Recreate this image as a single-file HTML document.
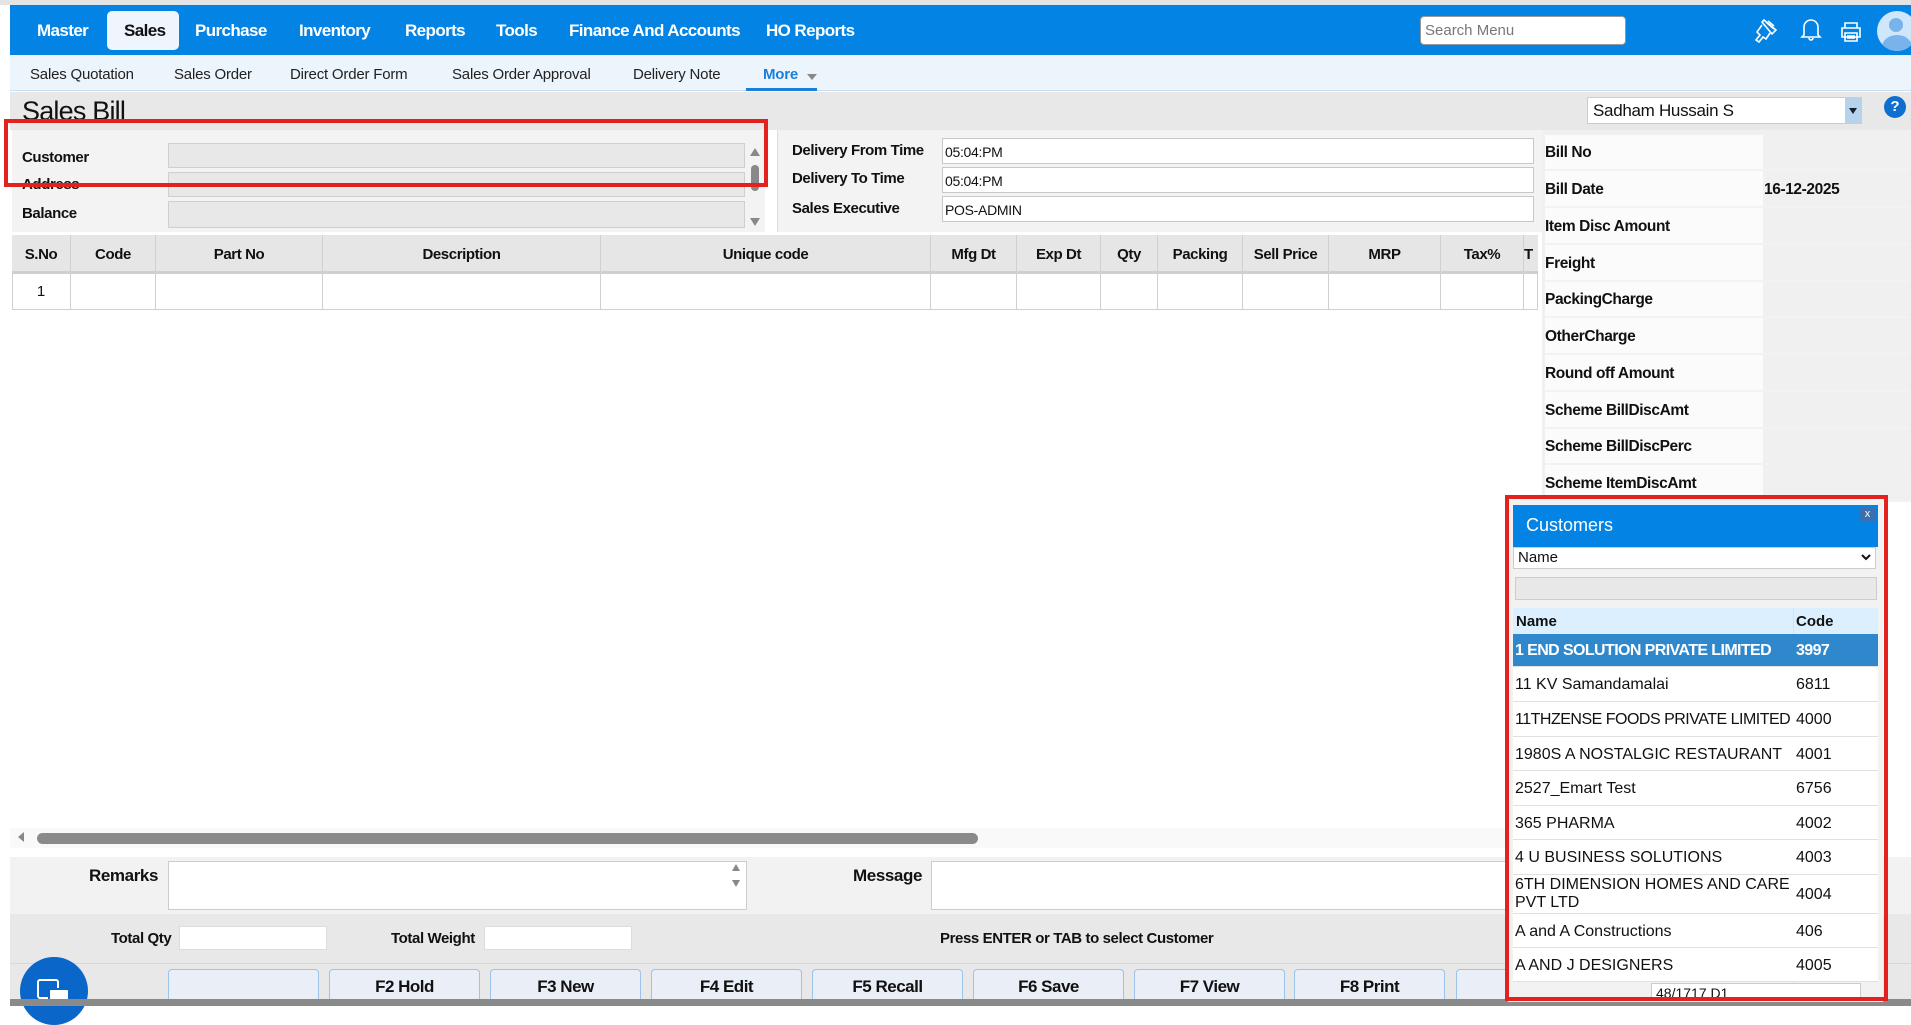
<!DOCTYPE html>
<html><head><meta charset="utf-8"><style>
*{box-sizing:border-box;margin:0;padding:0}
body{width:1911px;height:1006px;overflow:hidden;background:#fff;font-family:"Liberation Sans",sans-serif;position:relative;color:#111}
.a{position:absolute}
.nav{left:10px;top:5px;width:1901px;height:50px;background:#0383e3}
.nv{position:absolute;top:21px;color:#fff;font-weight:bold;font-size:17px;letter-spacing:-0.6px}
.sub{left:10px;top:55px;width:1901px;height:36px;background:#ecf4fc;border-bottom:1px solid #c9dff0}
.si{position:absolute;top:11px;font-size:15px;letter-spacing:-0.2px;color:#222}
.lbl{position:absolute;font-size:15px;font-weight:bold;letter-spacing:-0.4px}
.inp{position:absolute;background:#e8e8e8;border:1px solid #cfcfcf}
.winp{position:absolute;background:#fff;border:1px solid #c8c8c8;font-size:14px;padding:5px 0 0 2px;letter-spacing:-0.3px}
.th{position:absolute;top:235px;height:39px;border-right:1px solid #d0d0d0;font-size:15px;font-weight:bold;text-align:center;line-height:39px;letter-spacing:-0.4px}
.td{position:absolute;top:274px;height:36px;border-right:1px solid #d0d0d0}
.rr{position:absolute;left:1545px;width:366px;height:36px;border-bottom:2px solid #f2f2f2}
.rr b{position:absolute;left:0;top:9px;font-size:15.5px;letter-spacing:-0.4px}
.btn{position:absolute;top:969px;width:151px;height:31px;background:#e9eef7;border:1px solid #9cc3ea;border-bottom:none;border-radius:4px 4px 0 0;text-align:center;font-size:17px;font-weight:bold;line-height:33px;letter-spacing:-0.5px}
.cr{position:absolute;left:1513px;width:365px;border-bottom:1px solid #e0e0e0;font-size:16px;color:#111}
.cr span{position:absolute;left:2px}
.cr i{position:absolute;left:283px;font-style:normal}
</style></head><body>
<div class="a" style="left:0;top:0;width:1911px;height:5px;background:#e4e4e4"></div>
<div class="a nav"></div>
<div class="a" style="left:107px;top:11px;width:72px;height:39px;background:#eef5fc;border-radius:5px"></div>
<span class="nv" style="left:37px">Master</span>
<span class="nv" style="left:124px;color:#111">Sales</span>
<span class="nv" style="left:195px">Purchase</span>
<span class="nv" style="left:299px">Inventory</span>
<span class="nv" style="left:405px">Reports</span>
<span class="nv" style="left:496px">Tools</span>
<span class="nv" style="left:569px">Finance And Accounts</span>
<span class="nv" style="left:766px">HO Reports</span>
<div class="a" style="left:1420px;top:16px;width:206px;height:29px;background:#fff;border-radius:4px;border:1px solid #999;font-size:15px;color:#777;padding:5px 0 0 4px">Search Menu</div>
<svg class="a" style="left:1752px;top:16px" width="28" height="28" viewBox="0 0 28 28" fill="none" stroke="#fff" stroke-width="1.6"><path d="M12 4l12 10-4 4-10-12z M14 6l8 7 M16 5l6 5 M10 9l-5 7 3 3-4 5 3 2 4-5 3 2 4-6"/></svg>
<svg class="a" style="left:1799px;top:16px" width="24" height="26" viewBox="0 0 24 26" fill="none" stroke="#fff" stroke-width="1.6"><path d="M5 19V11a7 7 0 0 1 14 0v8l2 2H3z M10 22a2 2 0 0 0 4 0"/></svg>
<svg class="a" style="left:1839px;top:21px" width="24" height="22" viewBox="0 0 24 22" fill="none" stroke="#fff" stroke-width="1.6"><path d="M6 7V2h12v5 M3 7h18v9H3z M6 12h12v8H6z M8 15h8 M8 17h8"/></svg>
<div class="a" style="left:1877px;top:11px;width:40px;height:40px;border-radius:50%;background:#cfe6fb;overflow:hidden"><div class="a" style="left:12px;top:7px;width:14px;height:14px;border-radius:50%;background:#79b3ec"></div><div class="a" style="left:5px;top:24px;width:30px;height:24px;border-radius:50%;background:#79b3ec"></div></div>
<div class="a sub"></div>
<span class="si" style="left:30px;top:66px">Sales Quotation</span>
<span class="si" style="left:174px;top:66px">Sales Order</span>
<span class="si" style="left:290px;top:66px">Direct Order Form</span>
<span class="si" style="left:452px;top:66px">Sales Order Approval</span>
<span class="si" style="left:633px;top:66px">Delivery Note</span>
<span class="si" style="left:763px;top:66px;color:#1a7fd8;font-weight:bold">More</span>
<div class="a" style="left:807px;top:74px;border:5px solid transparent;border-top:6px solid #888"></div>
<div class="a" style="left:746px;top:88px;width:71px;height:3px;background:#1a7fd8"></div>
<div class="a" style="left:10px;top:92px;width:1901px;height:38px;background:#e8e8e8"></div>
<div class="a" style="left:22px;top:96px;font-size:27px;letter-spacing:-0.8px">Sales Bill</div>
<div class="a" style="left:1587px;top:97px;width:275px;height:27px;background:#fff;border:1px solid #ccc;font-size:17px;padding:3px 0 0 5px;letter-spacing:-0.3px">Sadham Hussain S</div>
<div class="a" style="left:1845px;top:98px;width:16px;height:25px;background:#b7d3ec"></div>
<div class="a" style="left:1849px;top:108px;border:4px solid transparent;border-top:6px solid #123"></div>
<div class="a" style="left:1884px;top:96px;width:22px;height:22px;border-radius:50%;background:#0d6fd0;color:#fff;font-weight:bold;font-size:15px;text-align:center;line-height:22px">?</div>
<div class="a" style="left:12px;top:130px;width:753px;height:102px;background:#f3f3f3"></div>
<span class="lbl" style="left:22px;top:149px">Customer</span>
<span class="lbl" style="left:22px;top:176px">Address</span>
<span class="lbl" style="left:22px;top:205px">Balance</span>
<div class="inp" style="left:168px;top:143px;width:577px;height:25px"></div>
<div class="inp" style="left:168px;top:172px;width:577px;height:25px"></div>
<div class="inp" style="left:168px;top:201px;width:577px;height:27px"></div>
<div class="a" style="left:750px;top:148px;border:5px solid transparent;border-bottom:8px solid #888;border-top:none"></div>
<div class="a" style="left:751px;top:165px;width:8px;height:26px;border-radius:4px;background:#888"></div>
<div class="a" style="left:750px;top:218px;border:5px solid transparent;border-top:8px solid #888;border-bottom:none"></div>
<div class="a" style="left:777px;top:130px;width:765px;height:102px;background:#f3f3f3;border-left:1px solid #ddd"></div>
<span class="lbl" style="left:792px;top:142px">Delivery From Time</span>
<span class="lbl" style="left:792px;top:170px">Delivery To Time</span>
<span class="lbl" style="left:792px;top:200px">Sales Executive</span>
<div class="winp" style="left:942px;top:138px;width:592px;height:26px">05:04:PM</div>
<div class="winp" style="left:942px;top:167px;width:592px;height:26px">05:04:PM</div>
<div class="winp" style="left:942px;top:196px;width:592px;height:26px">POS-ADMIN</div>
<div class="a" style="left:1542px;top:130px;width:369px;height:370px;background:#f0f0f0"></div>
<div class="a" style="left:1545px;top:135px;width:218px;height:360px;background:#fbfbfb"></div>
<div class="rr" style="top:135px"><b>Bill No</b></div>
<div class="rr" style="top:172px"><b>Bill Date</b><b style="left:219px;font-weight:bold">16-12-2025</b></div>
<div class="rr" style="top:209px"><b>Item Disc Amount</b></div>
<div class="rr" style="top:246px"><b>Freight</b></div>
<div class="rr" style="top:282px"><b>PackingCharge</b></div>
<div class="rr" style="top:319px"><b>OtherCharge</b></div>
<div class="rr" style="top:356px"><b>Round off Amount</b></div>
<div class="rr" style="top:393px"><b>Scheme BillDiscAmt</b></div>
<div class="rr" style="top:429px"><b>Scheme BillDiscPerc</b></div>
<div class="rr" style="top:466px"><b>Scheme ItemDiscAmt</b></div>
<div class="a" style="left:12px;top:235px;width:1526px;height:39px;background:#e6e6e6;border-bottom:3px solid #cfcfcf"></div>
<div class="th" style="left:12px;width:59px">S.No</div>
<div class="th" style="left:71px;width:85px">Code</div>
<div class="th" style="left:156px;width:167px">Part No</div>
<div class="th" style="left:323px;width:278px">Description</div>
<div class="th" style="left:601px;width:330px">Unique code</div>
<div class="th" style="left:931px;width:86px">Mfg Dt</div>
<div class="th" style="left:1017px;width:84px">Exp Dt</div>
<div class="th" style="left:1101px;width:57px">Qty</div>
<div class="th" style="left:1158px;width:85px">Packing</div>
<div class="th" style="left:1243px;width:86px">Sell Price</div>
<div class="th" style="left:1329px;width:112px">MRP</div>
<div class="th" style="left:1441px;width:83px">Tax%</div>
<div class="th" style="left:1524px;width:14px;border:none;text-align:left">T</div>
<div class="a" style="left:12px;top:274px;width:1526px;height:36px;border:1px solid #d0d0d0;border-top:none"></div>
<div class="td" style="left:12px;width:59px;font-size:15px;text-align:center;line-height:36px">1</div>
<div class="td" style="left:71px;width:85px"></div><div class="td" style="left:156px;width:167px"></div><div class="td" style="left:323px;width:278px"></div><div class="td" style="left:601px;width:330px"></div><div class="td" style="left:931px;width:86px"></div><div class="td" style="left:1017px;width:84px"></div><div class="td" style="left:1101px;width:57px"></div><div class="td" style="left:1158px;width:85px"></div><div class="td" style="left:1243px;width:86px"></div><div class="td" style="left:1329px;width:112px"></div><div class="td" style="left:1441px;width:83px"></div>
<div class="a" style="left:10px;top:828px;width:1530px;height:20px;background:#f9f9f9"></div>
<div class="a" style="left:18px;top:832px;border:5px solid transparent;border-right:6px solid #888;border-left:none"></div>
<div class="a" style="left:37px;top:833px;width:941px;height:11px;border-radius:6px;background:#8a8a8a"></div>
<div class="a" style="left:10px;top:857px;width:1901px;height:57px;background:#f2f2f2"></div>
<span class="lbl" style="left:89px;top:866px;font-size:17px">Remarks</span>
<div class="a" style="left:168px;top:861px;width:579px;height:49px;background:#fff;border:1px solid #ccc"></div>
<div class="a" style="left:732px;top:864px;border:4px solid transparent;border-bottom:7px solid #888;border-top:none"></div>
<div class="a" style="left:732px;top:880px;border:4px solid transparent;border-top:7px solid #888;border-bottom:none"></div>
<span class="lbl" style="left:853px;top:866px;font-size:17px">Message</span>
<div class="a" style="left:931px;top:861px;width:580px;height:49px;background:#fff;border:1px solid #ccc"></div>
<div class="a" style="left:10px;top:914px;width:1901px;height:49px;background:#e8e8e8"></div>
<span class="lbl" style="left:111px;top:930px">Total Qty</span>
<div class="a" style="left:179px;top:926px;width:148px;height:24px;background:#fff;border:1px solid #ddd"></div>
<span class="lbl" style="left:391px;top:930px">Total Weight</span>
<div class="a" style="left:484px;top:926px;width:148px;height:24px;background:#fff;border:1px solid #ddd"></div>
<span class="lbl" style="left:940px;top:930px">Press ENTER or TAB to select Customer</span>
<div class="a" style="left:10px;top:963px;width:1901px;height:37px;background:#e8e8e8;border-top:1px solid #d8d8d8"></div>
<div class="btn" style="left:168px"></div>
<div class="btn" style="left:329px">F2 Hold</div>
<div class="btn" style="left:490px">F3 New</div>
<div class="btn" style="left:651px">F4 Edit</div>
<div class="btn" style="left:812px">F5 Recall</div>
<div class="btn" style="left:973px">F6 Save</div>
<div class="btn" style="left:1134px">F7 View</div>
<div class="btn" style="left:1294px">F8 Print</div>
<div class="btn" style="left:1456px">F9</div>
<div class="a" style="left:20px;top:957px;width:68px;height:68px;border-radius:50%;background:#0a66c8"></div>
<div class="a" style="left:37px;top:979px;width:22px;height:20px;border:2px solid #fff;border-radius:3px"></div>
<div class="a" style="left:48px;top:988px;width:22px;height:18px;background:#fff;border-radius:3px;border:2px solid #0a66c8"></div>
<div class="a" style="left:10px;top:999px;width:1901px;height:7px;background:#8a8a8a"></div>
<div class="a" style="left:4px;top:119px;width:764px;height:68px;border:4px solid #e3211f"></div>
<div class="a" style="left:1508px;top:498px;width:375px;height:504px;background:#f2f2f2"></div>
<div class="a" style="left:1513px;top:505px;width:365px;height:42px;background:#0383e3"></div>
<span class="a" style="left:1526px;top:515px;color:#fff;font-size:18px">Customers</span>
<div class="a" style="left:1860px;top:508px;width:15px;height:13px;background:#3a6fb0;color:#fff;font-size:11px;text-align:center;line-height:13px">x</div>
<div class="a" style="left:1513px;top:547px;width:363px;height:22px;background:#fff;border:1px solid #ccc;font-size:15px;padding:1px 0 0 4px">Name</div>
<svg class="a" style="left:1861px;top:554px" width="10" height="8"><path d="M1 1l4 4 4-4" stroke="#111" stroke-width="2" fill="none"/></svg>
<div class="a" style="left:1515px;top:577px;width:362px;height:23px;background:#e8e8e8;border:1px solid #ccc"></div>
<div class="a" style="left:1513px;top:608px;width:365px;height:26px;background:#dcefff"></div>
<b class="a" style="left:1516px;top:613px;font-size:15px">Name</b>
<b class="a" style="left:1796px;top:613px;font-size:15px">Code</b>
<div class="a" style="left:1793px;top:608px;width:1px;height:392px;background:#e0e0e0"></div>
<div class="cr" style="top:634px;height:33px;background:#2f87cc;color:#fff;font-weight:bold;letter-spacing:-0.6px"><span style="top:8px">1 END SOLUTION PRIVATE LIMITED</span><i style="top:8px">3997</i></div>
<div class="cr" style="top:667px;height:35px;background:#fff"><span style="top:9px">11 KV Samandamalai</span><i style="top:9px">6811</i></div>
<div class="cr" style="top:702px;height:35px;background:#fff"><span style="top:9px;letter-spacing:-0.5px">11THZENSE FOODS PRIVATE LIMITED</span><i style="top:9px">4000</i></div>
<div class="cr" style="top:737px;height:34px;background:#fff"><span style="top:9px">1980S A NOSTALGIC RESTAURANT</span><i style="top:9px">4001</i></div>
<div class="cr" style="top:771px;height:35px;background:#fff"><span style="top:9px">2527_Emart Test</span><i style="top:9px">6756</i></div>
<div class="cr" style="top:806px;height:34px;background:#fff"><span style="top:9px">365 PHARMA</span><i style="top:9px">4002</i></div>
<div class="cr" style="top:840px;height:35px;background:#fff"><span style="top:9px">4 U BUSINESS SOLUTIONS</span><i style="top:9px">4003</i></div>
<div class="cr" style="top:875px;height:39px;background:#fff;line-height:18px"><span style="top:1px;width:280px">6TH DIMENSION HOMES AND CARE PVT LTD</span><i style="top:11px">4004</i></div>
<div class="cr" style="top:914px;height:34px;background:#fff"><span style="top:9px">A and A Constructions</span><i style="top:9px">406</i></div>
<div class="cr" style="top:948px;height:34px;background:#fff"><span style="top:9px">A AND J DESIGNERS</span><i style="top:9px">4005</i></div>
<div class="a" style="left:1651px;top:983px;width:210px;height:17px;background:#fff;border:1px solid #ccc;font-size:14px;padding-left:4px;overflow:hidden;line-height:18px">48/1717 D1</div>
<div class="a" style="left:1505px;top:495px;width:383px;height:506px;border:4px solid #e3211f"></div>
</body></html>
